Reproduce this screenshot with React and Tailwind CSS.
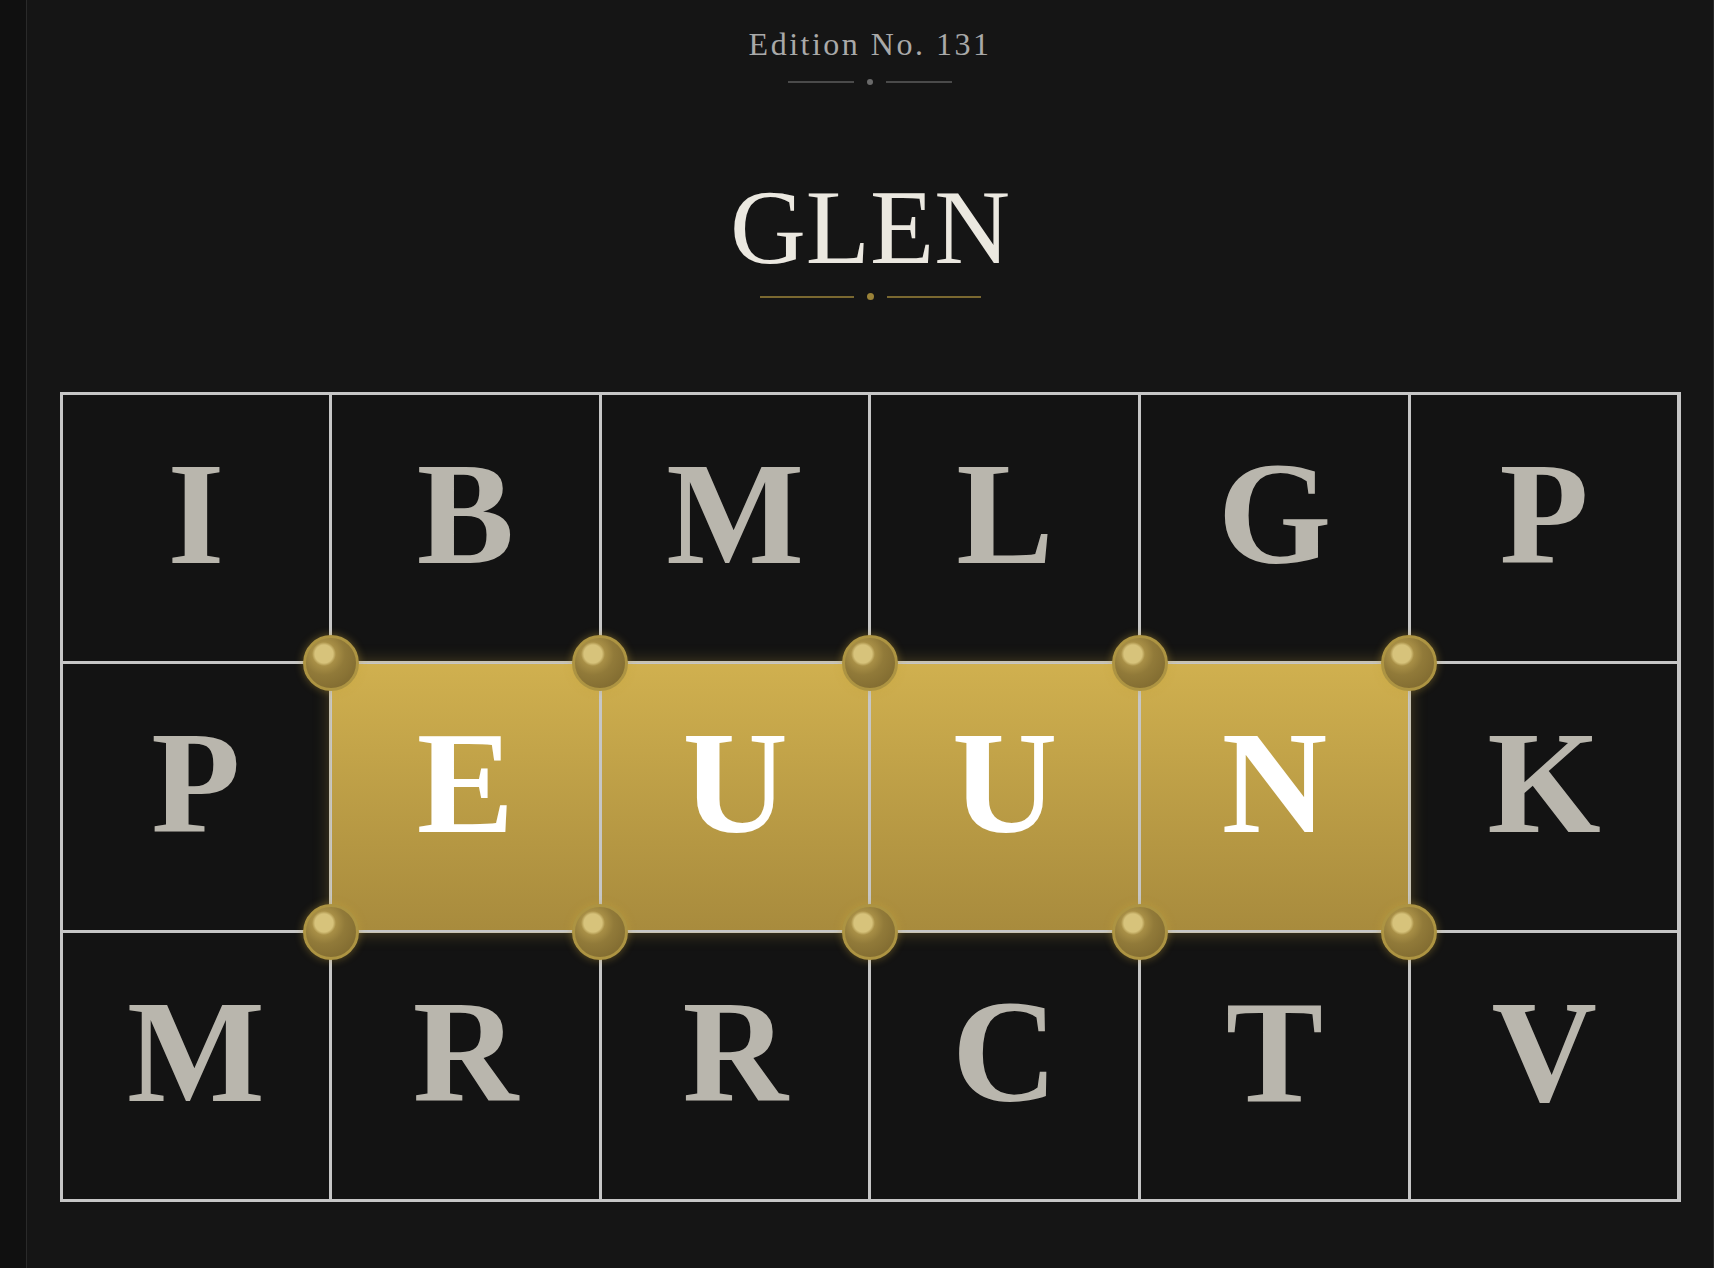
import React from 'react';

const SERIF = "font-['Liberation_Serif','Times_New_Roman',serif]";

const ROWS = [
  ['I', 'B', 'M', 'L', 'G', 'P'],
  ['P', 'E', 'U', 'U', 'N', 'K'],
  ['M', 'R', 'R', 'C', 'T', 'V'],
];

// highlighted word: row 1, columns 1..4
const isLit = (r, c) => r === 1 && c >= 1 && c <= 4;

const STEP_X = 269.67;
const STEP_Y = 269;

function Pin({ x, y }) {
  return (
    <div
      className="absolute w-[56px] h-[56px] -ml-[28px] -mt-[28px] rounded-full border-[3px] border-[#ad9442] shadow-[0_0_8px_rgba(200,165,60,0.45)] bg-[radial-gradient(circle_at_36%_32%,#d7c37b_0,#d7c37b_9px,#a88f46_12px,#917a39_45%,#79642c_100%)]"
      style={{ left: x, top: y }}
    />
  );
}

function Divider({ lineW, line, dot, dotSize }) {
  return (
    <div className="flex items-center gap-[13px]">
      <div className={`${lineW} h-[2px] ${line}`} />
      <div className={`${dotSize} rounded-full ${dot}`} />
      <div className={`${lineW} h-[2px] ${line}`} />
    </div>
  );
}

export default function App() {
  const pins = [];
  [1, 2].forEach(j => {
    [1, 2, 3, 4, 5].forEach(k => {
      pins.push({ x: 1.5 + k * STEP_X, y: 1.5 + j * STEP_Y, key: `${j}-${k}` });
    });
  });

  return (
    <div className="flex min-h-screen w-full bg-[#101010]">
      <div className="w-[26px] shrink-0" />
      <div className="flex-1 min-h-screen border-l border-r border-[#2a2a2a] bg-[#151515] flex flex-col items-center">
        {/* edition */}
        <div className={`${SERIF} pt-[28px] text-[32px] leading-[32px] tracking-[2.5px] text-[#a9a9a9]`}>
          Edition No. 131
        </div>
        <div className="mt-[19px]">
          <Divider lineW="w-[66px]" line="bg-[#4a4a4a]" dot="bg-[#6a6a6a]" dotSize="w-[6px] h-[6px]" />
        </div>

        {/* title */}
        <div className={`${SERIF} mt-[90px] text-[105px] leading-[105px] text-[#ebe8e0]`}>
          GLEN
        </div>
        <div className="mt-[13px]">
          <Divider lineW="w-[94px]" line="bg-[#7a6830]" dot="bg-[#9a8238]" dotSize="w-[7px] h-[7px]" />
        </div>

        {/* board */}
        <div className="relative mt-[92px] w-[1621px]">
          <div className="grid grid-cols-6 gap-[3px] p-[3px] bg-[#c6c6c6]">
            {ROWS.map((row, r) =>
              row.map((ch, c) => (
                <div
                  key={`${r}-${c}`}
                  className={`h-[266px] flex items-center justify-center pb-[28px] ${SERIF} font-bold text-[146px] leading-none ${
                    isLit(r, c)
                      ? 'bg-[linear-gradient(180deg,#d0b04f,#a88b3d)] text-white'
                      : 'bg-[#131313] text-[#b9b6ad]'
                  }`}
                >
                  {ch}
                </div>
              ))
            )}
          </div>

          {/* glow around the lit word */}
          <div
            className="absolute pointer-events-none shadow-[0_0_16px_rgba(210,175,70,0.35)]"
            style={{ left: 1.5 + STEP_X, top: 1.5 + STEP_Y, width: 4 * STEP_X, height: STEP_Y }}
          />

          {pins.map(p => (
            <Pin key={p.key} x={p.x} y={p.y} />
          ))}
        </div>
      </div>
    </div>
  );
}
